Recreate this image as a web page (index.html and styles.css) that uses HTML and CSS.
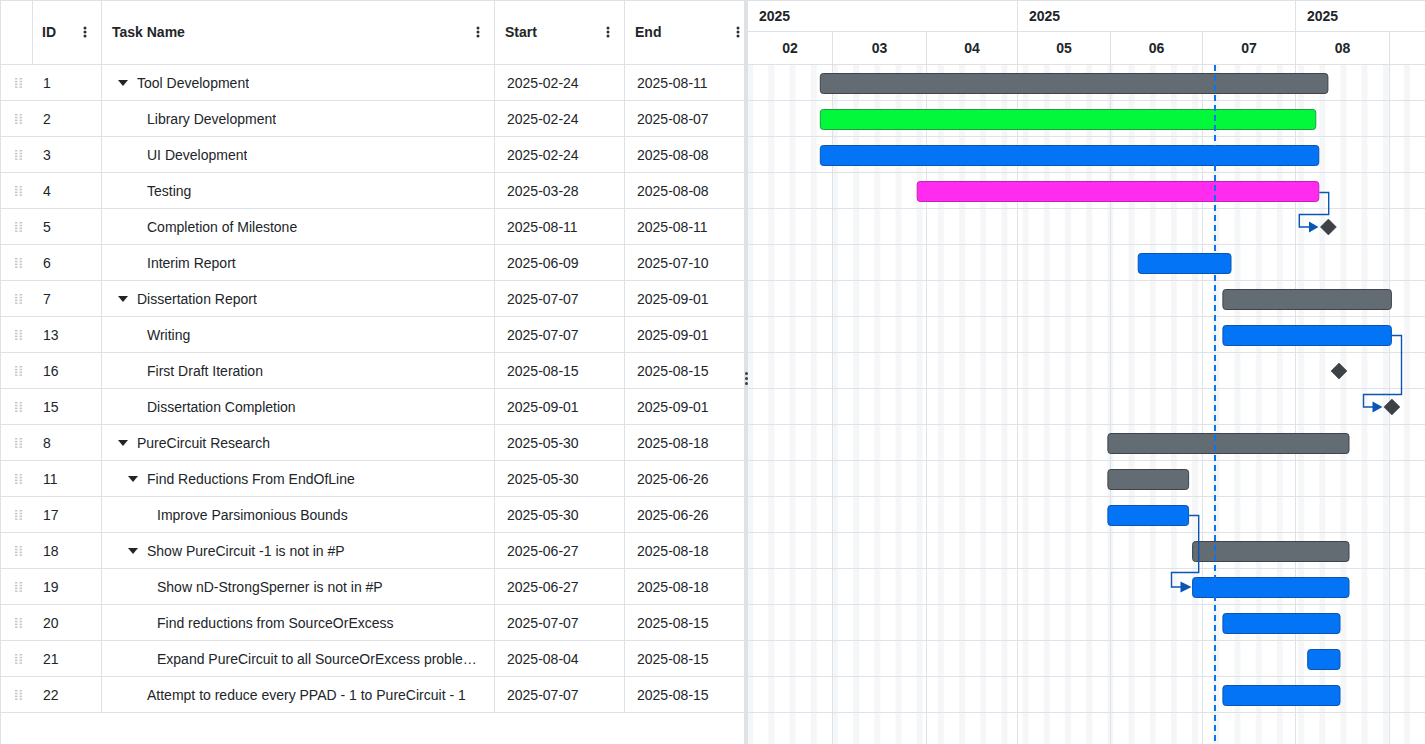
FILE: index.html
```html
<!DOCTYPE html>
<html lang="en">
<head>
<meta charset="utf-8">
<title>Gantt</title>
<link rel="stylesheet" href="styles.css">
</head>
<body>
<div class="app">
  <section class="grid-panel">
    <div class="row head">
      <div class="cell c-handle"></div>
      <div class="cell c-id"><span>ID</span><svg class="kebab" width="4" height="12" viewBox="0 0 4 12"><circle cx="2" cy="2" r="1.5"/><circle cx="2" cy="6" r="1.5"/><circle cx="2" cy="10" r="1.5"/></svg></div>
      <div class="cell c-name"><span>Task Name</span><svg class="kebab" width="4" height="12" viewBox="0 0 4 12"><circle cx="2" cy="2" r="1.5"/><circle cx="2" cy="6" r="1.5"/><circle cx="2" cy="10" r="1.5"/></svg></div>
      <div class="cell c-date"><span>Start</span><svg class="kebab" width="4" height="12" viewBox="0 0 4 12"><circle cx="2" cy="2" r="1.5"/><circle cx="2" cy="6" r="1.5"/><circle cx="2" cy="10" r="1.5"/></svg></div>
      <div class="cell c-end"><span>End</span><svg class="kebab" width="4" height="12" viewBox="0 0 4 12"><circle cx="2" cy="2" r="1.5"/><circle cx="2" cy="6" r="1.5"/><circle cx="2" cy="10" r="1.5"/></svg></div>
    </div>

    <div class="row">
      <div class="cell c-handle"><svg class="grip" width="7" height="10" viewBox="0 0 7 10"><rect x="0" y="0" width="2.5" height="1.5"/><rect x="4.5" y="0" width="2.5" height="1.5"/><rect x="0" y="2.8" width="2.5" height="1.5"/><rect x="4.5" y="2.8" width="2.5" height="1.5"/><rect x="0" y="5.6" width="2.5" height="1.5"/><rect x="4.5" y="5.6" width="2.5" height="1.5"/><rect x="0" y="8.4" width="2.5" height="1.5"/><rect x="4.5" y="8.4" width="2.5" height="1.5"/></svg></div>
      <div class="cell c-id">1</div>
      <div class="cell c-name lvl0"><span class="toggle"><svg width="10" height="6" viewBox="0 0 10 6"><polygon points="0,0 10,0 5,6"/></svg></span><span class="name">Tool Development</span></div>
      <div class="cell c-date">2025-02-24</div>
      <div class="cell c-end">2025-08-11</div>
    </div>
    <div class="row">
      <div class="cell c-handle"><svg class="grip" width="7" height="10" viewBox="0 0 7 10"><rect x="0" y="0" width="2.5" height="1.5"/><rect x="4.5" y="0" width="2.5" height="1.5"/><rect x="0" y="2.8" width="2.5" height="1.5"/><rect x="4.5" y="2.8" width="2.5" height="1.5"/><rect x="0" y="5.6" width="2.5" height="1.5"/><rect x="4.5" y="5.6" width="2.5" height="1.5"/><rect x="0" y="8.4" width="2.5" height="1.5"/><rect x="4.5" y="8.4" width="2.5" height="1.5"/></svg></div>
      <div class="cell c-id">2</div>
      <div class="cell c-name lvl1"><span class="toggle"></span><span class="name">Library Development</span></div>
      <div class="cell c-date">2025-02-24</div>
      <div class="cell c-end">2025-08-07</div>
    </div>
    <div class="row">
      <div class="cell c-handle"><svg class="grip" width="7" height="10" viewBox="0 0 7 10"><rect x="0" y="0" width="2.5" height="1.5"/><rect x="4.5" y="0" width="2.5" height="1.5"/><rect x="0" y="2.8" width="2.5" height="1.5"/><rect x="4.5" y="2.8" width="2.5" height="1.5"/><rect x="0" y="5.6" width="2.5" height="1.5"/><rect x="4.5" y="5.6" width="2.5" height="1.5"/><rect x="0" y="8.4" width="2.5" height="1.5"/><rect x="4.5" y="8.4" width="2.5" height="1.5"/></svg></div>
      <div class="cell c-id">3</div>
      <div class="cell c-name lvl1"><span class="toggle"></span><span class="name">UI Development</span></div>
      <div class="cell c-date">2025-02-24</div>
      <div class="cell c-end">2025-08-08</div>
    </div>
    <div class="row">
      <div class="cell c-handle"><svg class="grip" width="7" height="10" viewBox="0 0 7 10"><rect x="0" y="0" width="2.5" height="1.5"/><rect x="4.5" y="0" width="2.5" height="1.5"/><rect x="0" y="2.8" width="2.5" height="1.5"/><rect x="4.5" y="2.8" width="2.5" height="1.5"/><rect x="0" y="5.6" width="2.5" height="1.5"/><rect x="4.5" y="5.6" width="2.5" height="1.5"/><rect x="0" y="8.4" width="2.5" height="1.5"/><rect x="4.5" y="8.4" width="2.5" height="1.5"/></svg></div>
      <div class="cell c-id">4</div>
      <div class="cell c-name lvl1"><span class="toggle"></span><span class="name">Testing</span></div>
      <div class="cell c-date">2025-03-28</div>
      <div class="cell c-end">2025-08-08</div>
    </div>
    <div class="row">
      <div class="cell c-handle"><svg class="grip" width="7" height="10" viewBox="0 0 7 10"><rect x="0" y="0" width="2.5" height="1.5"/><rect x="4.5" y="0" width="2.5" height="1.5"/><rect x="0" y="2.8" width="2.5" height="1.5"/><rect x="4.5" y="2.8" width="2.5" height="1.5"/><rect x="0" y="5.6" width="2.5" height="1.5"/><rect x="4.5" y="5.6" width="2.5" height="1.5"/><rect x="0" y="8.4" width="2.5" height="1.5"/><rect x="4.5" y="8.4" width="2.5" height="1.5"/></svg></div>
      <div class="cell c-id">5</div>
      <div class="cell c-name lvl1"><span class="toggle"></span><span class="name">Completion of Milestone</span></div>
      <div class="cell c-date">2025-08-11</div>
      <div class="cell c-end">2025-08-11</div>
    </div>
    <div class="row">
      <div class="cell c-handle"><svg class="grip" width="7" height="10" viewBox="0 0 7 10"><rect x="0" y="0" width="2.5" height="1.5"/><rect x="4.5" y="0" width="2.5" height="1.5"/><rect x="0" y="2.8" width="2.5" height="1.5"/><rect x="4.5" y="2.8" width="2.5" height="1.5"/><rect x="0" y="5.6" width="2.5" height="1.5"/><rect x="4.5" y="5.6" width="2.5" height="1.5"/><rect x="0" y="8.4" width="2.5" height="1.5"/><rect x="4.5" y="8.4" width="2.5" height="1.5"/></svg></div>
      <div class="cell c-id">6</div>
      <div class="cell c-name lvl1"><span class="toggle"></span><span class="name">Interim Report</span></div>
      <div class="cell c-date">2025-06-09</div>
      <div class="cell c-end">2025-07-10</div>
    </div>
    <div class="row">
      <div class="cell c-handle"><svg class="grip" width="7" height="10" viewBox="0 0 7 10"><rect x="0" y="0" width="2.5" height="1.5"/><rect x="4.5" y="0" width="2.5" height="1.5"/><rect x="0" y="2.8" width="2.5" height="1.5"/><rect x="4.5" y="2.8" width="2.5" height="1.5"/><rect x="0" y="5.6" width="2.5" height="1.5"/><rect x="4.5" y="5.6" width="2.5" height="1.5"/><rect x="0" y="8.4" width="2.5" height="1.5"/><rect x="4.5" y="8.4" width="2.5" height="1.5"/></svg></div>
      <div class="cell c-id">7</div>
      <div class="cell c-name lvl0"><span class="toggle"><svg width="10" height="6" viewBox="0 0 10 6"><polygon points="0,0 10,0 5,6"/></svg></span><span class="name">Dissertation Report</span></div>
      <div class="cell c-date">2025-07-07</div>
      <div class="cell c-end">2025-09-01</div>
    </div>
    <div class="row">
      <div class="cell c-handle"><svg class="grip" width="7" height="10" viewBox="0 0 7 10"><rect x="0" y="0" width="2.5" height="1.5"/><rect x="4.5" y="0" width="2.5" height="1.5"/><rect x="0" y="2.8" width="2.5" height="1.5"/><rect x="4.5" y="2.8" width="2.5" height="1.5"/><rect x="0" y="5.6" width="2.5" height="1.5"/><rect x="4.5" y="5.6" width="2.5" height="1.5"/><rect x="0" y="8.4" width="2.5" height="1.5"/><rect x="4.5" y="8.4" width="2.5" height="1.5"/></svg></div>
      <div class="cell c-id">13</div>
      <div class="cell c-name lvl1"><span class="toggle"></span><span class="name">Writing</span></div>
      <div class="cell c-date">2025-07-07</div>
      <div class="cell c-end">2025-09-01</div>
    </div>
    <div class="row">
      <div class="cell c-handle"><svg class="grip" width="7" height="10" viewBox="0 0 7 10"><rect x="0" y="0" width="2.5" height="1.5"/><rect x="4.5" y="0" width="2.5" height="1.5"/><rect x="0" y="2.8" width="2.5" height="1.5"/><rect x="4.5" y="2.8" width="2.5" height="1.5"/><rect x="0" y="5.6" width="2.5" height="1.5"/><rect x="4.5" y="5.6" width="2.5" height="1.5"/><rect x="0" y="8.4" width="2.5" height="1.5"/><rect x="4.5" y="8.4" width="2.5" height="1.5"/></svg></div>
      <div class="cell c-id">16</div>
      <div class="cell c-name lvl1"><span class="toggle"></span><span class="name">First Draft Iteration</span></div>
      <div class="cell c-date">2025-08-15</div>
      <div class="cell c-end">2025-08-15</div>
    </div>
    <div class="row">
      <div class="cell c-handle"><svg class="grip" width="7" height="10" viewBox="0 0 7 10"><rect x="0" y="0" width="2.5" height="1.5"/><rect x="4.5" y="0" width="2.5" height="1.5"/><rect x="0" y="2.8" width="2.5" height="1.5"/><rect x="4.5" y="2.8" width="2.5" height="1.5"/><rect x="0" y="5.6" width="2.5" height="1.5"/><rect x="4.5" y="5.6" width="2.5" height="1.5"/><rect x="0" y="8.4" width="2.5" height="1.5"/><rect x="4.5" y="8.4" width="2.5" height="1.5"/></svg></div>
      <div class="cell c-id">15</div>
      <div class="cell c-name lvl1"><span class="toggle"></span><span class="name">Dissertation Completion</span></div>
      <div class="cell c-date">2025-09-01</div>
      <div class="cell c-end">2025-09-01</div>
    </div>
    <div class="row">
      <div class="cell c-handle"><svg class="grip" width="7" height="10" viewBox="0 0 7 10"><rect x="0" y="0" width="2.5" height="1.5"/><rect x="4.5" y="0" width="2.5" height="1.5"/><rect x="0" y="2.8" width="2.5" height="1.5"/><rect x="4.5" y="2.8" width="2.5" height="1.5"/><rect x="0" y="5.6" width="2.5" height="1.5"/><rect x="4.5" y="5.6" width="2.5" height="1.5"/><rect x="0" y="8.4" width="2.5" height="1.5"/><rect x="4.5" y="8.4" width="2.5" height="1.5"/></svg></div>
      <div class="cell c-id">8</div>
      <div class="cell c-name lvl0"><span class="toggle"><svg width="10" height="6" viewBox="0 0 10 6"><polygon points="0,0 10,0 5,6"/></svg></span><span class="name">PureCircuit Research</span></div>
      <div class="cell c-date">2025-05-30</div>
      <div class="cell c-end">2025-08-18</div>
    </div>
    <div class="row">
      <div class="cell c-handle"><svg class="grip" width="7" height="10" viewBox="0 0 7 10"><rect x="0" y="0" width="2.5" height="1.5"/><rect x="4.5" y="0" width="2.5" height="1.5"/><rect x="0" y="2.8" width="2.5" height="1.5"/><rect x="4.5" y="2.8" width="2.5" height="1.5"/><rect x="0" y="5.6" width="2.5" height="1.5"/><rect x="4.5" y="5.6" width="2.5" height="1.5"/><rect x="0" y="8.4" width="2.5" height="1.5"/><rect x="4.5" y="8.4" width="2.5" height="1.5"/></svg></div>
      <div class="cell c-id">11</div>
      <div class="cell c-name lvl1"><span class="toggle"><svg width="10" height="6" viewBox="0 0 10 6"><polygon points="0,0 10,0 5,6"/></svg></span><span class="name">Find Reductions From EndOfLine</span></div>
      <div class="cell c-date">2025-05-30</div>
      <div class="cell c-end">2025-06-26</div>
    </div>
    <div class="row">
      <div class="cell c-handle"><svg class="grip" width="7" height="10" viewBox="0 0 7 10"><rect x="0" y="0" width="2.5" height="1.5"/><rect x="4.5" y="0" width="2.5" height="1.5"/><rect x="0" y="2.8" width="2.5" height="1.5"/><rect x="4.5" y="2.8" width="2.5" height="1.5"/><rect x="0" y="5.6" width="2.5" height="1.5"/><rect x="4.5" y="5.6" width="2.5" height="1.5"/><rect x="0" y="8.4" width="2.5" height="1.5"/><rect x="4.5" y="8.4" width="2.5" height="1.5"/></svg></div>
      <div class="cell c-id">17</div>
      <div class="cell c-name lvl2"><span class="toggle"></span><span class="name">Improve Parsimonious Bounds</span></div>
      <div class="cell c-date">2025-05-30</div>
      <div class="cell c-end">2025-06-26</div>
    </div>
    <div class="row">
      <div class="cell c-handle"><svg class="grip" width="7" height="10" viewBox="0 0 7 10"><rect x="0" y="0" width="2.5" height="1.5"/><rect x="4.5" y="0" width="2.5" height="1.5"/><rect x="0" y="2.8" width="2.5" height="1.5"/><rect x="4.5" y="2.8" width="2.5" height="1.5"/><rect x="0" y="5.6" width="2.5" height="1.5"/><rect x="4.5" y="5.6" width="2.5" height="1.5"/><rect x="0" y="8.4" width="2.5" height="1.5"/><rect x="4.5" y="8.4" width="2.5" height="1.5"/></svg></div>
      <div class="cell c-id">18</div>
      <div class="cell c-name lvl1"><span class="toggle"><svg width="10" height="6" viewBox="0 0 10 6"><polygon points="0,0 10,0 5,6"/></svg></span><span class="name">Show PureCircuit -1 is not in #P</span></div>
      <div class="cell c-date">2025-06-27</div>
      <div class="cell c-end">2025-08-18</div>
    </div>
    <div class="row">
      <div class="cell c-handle"><svg class="grip" width="7" height="10" viewBox="0 0 7 10"><rect x="0" y="0" width="2.5" height="1.5"/><rect x="4.5" y="0" width="2.5" height="1.5"/><rect x="0" y="2.8" width="2.5" height="1.5"/><rect x="4.5" y="2.8" width="2.5" height="1.5"/><rect x="0" y="5.6" width="2.5" height="1.5"/><rect x="4.5" y="5.6" width="2.5" height="1.5"/><rect x="0" y="8.4" width="2.5" height="1.5"/><rect x="4.5" y="8.4" width="2.5" height="1.5"/></svg></div>
      <div class="cell c-id">19</div>
      <div class="cell c-name lvl2"><span class="toggle"></span><span class="name">Show nD-StrongSperner is not in #P</span></div>
      <div class="cell c-date">2025-06-27</div>
      <div class="cell c-end">2025-08-18</div>
    </div>
    <div class="row">
      <div class="cell c-handle"><svg class="grip" width="7" height="10" viewBox="0 0 7 10"><rect x="0" y="0" width="2.5" height="1.5"/><rect x="4.5" y="0" width="2.5" height="1.5"/><rect x="0" y="2.8" width="2.5" height="1.5"/><rect x="4.5" y="2.8" width="2.5" height="1.5"/><rect x="0" y="5.6" width="2.5" height="1.5"/><rect x="4.5" y="5.6" width="2.5" height="1.5"/><rect x="0" y="8.4" width="2.5" height="1.5"/><rect x="4.5" y="8.4" width="2.5" height="1.5"/></svg></div>
      <div class="cell c-id">20</div>
      <div class="cell c-name lvl2"><span class="toggle"></span><span class="name">Find reductions from SourceOrExcess</span></div>
      <div class="cell c-date">2025-07-07</div>
      <div class="cell c-end">2025-08-15</div>
    </div>
    <div class="row">
      <div class="cell c-handle"><svg class="grip" width="7" height="10" viewBox="0 0 7 10"><rect x="0" y="0" width="2.5" height="1.5"/><rect x="4.5" y="0" width="2.5" height="1.5"/><rect x="0" y="2.8" width="2.5" height="1.5"/><rect x="4.5" y="2.8" width="2.5" height="1.5"/><rect x="0" y="5.6" width="2.5" height="1.5"/><rect x="4.5" y="5.6" width="2.5" height="1.5"/><rect x="0" y="8.4" width="2.5" height="1.5"/><rect x="4.5" y="8.4" width="2.5" height="1.5"/></svg></div>
      <div class="cell c-id">21</div>
      <div class="cell c-name lvl2"><span class="toggle"></span><span class="name">Expand PureCircuit to all SourceOrExcess problems</span></div>
      <div class="cell c-date">2025-08-04</div>
      <div class="cell c-end">2025-08-15</div>
    </div>
    <div class="row">
      <div class="cell c-handle"><svg class="grip" width="7" height="10" viewBox="0 0 7 10"><rect x="0" y="0" width="2.5" height="1.5"/><rect x="4.5" y="0" width="2.5" height="1.5"/><rect x="0" y="2.8" width="2.5" height="1.5"/><rect x="4.5" y="2.8" width="2.5" height="1.5"/><rect x="0" y="5.6" width="2.5" height="1.5"/><rect x="4.5" y="5.6" width="2.5" height="1.5"/><rect x="0" y="8.4" width="2.5" height="1.5"/><rect x="4.5" y="8.4" width="2.5" height="1.5"/></svg></div>
      <div class="cell c-id">22</div>
      <div class="cell c-name lvl1"><span class="toggle"></span><span class="name">Attempt to reduce every PPAD - 1 to PureCircuit - 1</span></div>
      <div class="cell c-date">2025-07-07</div>
      <div class="cell c-end">2025-08-15</div>
    </div>
  </section>

  <div class="splitter"><span class="dots"><i></i><i></i><i></i></span></div>

  <section class="gantt-panel">
    <div class="tier tier-years">
      <div class="ycell y1">2025</div>
      <div class="ycell y2">2025</div>
      <div class="ycell y3">2025</div>
    </div>
    <div class="tier tier-months">
      <div class="mcell m02">02</div>
      <div class="mcell m03">03</div>
      <div class="mcell m04">04</div>
      <div class="mcell m05">05</div>
      <div class="mcell m06">06</div>
      <div class="mcell m07">07</div>
      <div class="mcell m08">08</div>
      <div class="mcell m09"></div>
    </div>
    <svg class="chart" width="677" height="679" viewBox="0 0 677 679">
      <defs>
        <pattern id="weekend" patternUnits="userSpaceOnUse" x="-0.8" y="0" width="21.189" height="679">
          <rect x="0" y="0" width="6.054" height="679" fill="#f5f6f8"/>
        </pattern>
      </defs>
      <rect x="0" y="0" width="677" height="679" fill="url(#weekend)"/>
      <g class="vlines" stroke="#dfe2e6" stroke-width="1">
        <line x1="84.5" y1="0" x2="84.5" y2="679"/>
        <line x1="178.5" y1="0" x2="178.5" y2="679"/>
        <line x1="269.5" y1="0" x2="269.5" y2="679"/>
        <line x1="362.5" y1="0" x2="362.5" y2="679"/>
        <line x1="454.5" y1="0" x2="454.5" y2="679"/>
        <line x1="547.5" y1="0" x2="547.5" y2="679"/>
        <line x1="641.5" y1="0" x2="641.5" y2="679"/>
      </g>
      <g class="hlines" stroke="#dfe2e6" stroke-width="1">
        <line x1="0" y1="35.5" x2="677" y2="35.5"/>
        <line x1="0" y1="71.5" x2="677" y2="71.5"/>
        <line x1="0" y1="107.5" x2="677" y2="107.5"/>
        <line x1="0" y1="143.5" x2="677" y2="143.5"/>
        <line x1="0" y1="179.5" x2="677" y2="179.5"/>
        <line x1="0" y1="215.5" x2="677" y2="215.5"/>
        <line x1="0" y1="251.5" x2="677" y2="251.5"/>
        <line x1="0" y1="287.5" x2="677" y2="287.5"/>
        <line x1="0" y1="323.5" x2="677" y2="323.5"/>
        <line x1="0" y1="359.5" x2="677" y2="359.5"/>
        <line x1="0" y1="395.5" x2="677" y2="395.5"/>
        <line x1="0" y1="431.5" x2="677" y2="431.5"/>
        <line x1="0" y1="467.5" x2="677" y2="467.5"/>
        <line x1="0" y1="503.5" x2="677" y2="503.5"/>
        <line x1="0" y1="539.5" x2="677" y2="539.5"/>
        <line x1="0" y1="575.5" x2="677" y2="575.5"/>
        <line x1="0" y1="611.5" x2="677" y2="611.5"/>
        <line x1="0" y1="647.5" x2="677" y2="647.5"/>
      </g>

      <g class="bars">
        <rect class="bar parent" x="72.3" y="8.5" width="507.6" height="20" rx="3"/>
        <rect class="bar green" x="72.3" y="44.5" width="495.5" height="20" rx="3"/>
        <rect class="bar blue" x="72.3" y="80.5" width="498.5" height="20" rx="3"/>
        <rect class="bar magenta" x="169.2" y="116.5" width="401.6" height="20" rx="3"/>
        <polygon class="milestone" points="580.4,154 588.4,162 580.4,170 572.4,162"/>
        <rect class="bar blue" x="390.2" y="188.5" width="92.8" height="20" rx="3"/>
        <rect class="bar parent" x="474.9" y="224.5" width="168.5" height="20" rx="3"/>
        <rect class="bar blue" x="474.9" y="260.5" width="168.5" height="20" rx="3"/>
        <polygon class="milestone" points="591,298 599,306 591,314 583,306"/>
        <polygon class="milestone" points="643.9,334 651.9,342 643.9,350 635.9,342"/>
        <rect class="bar parent" x="359.9" y="368.5" width="241.1" height="20" rx="3"/>
        <rect class="bar parent" x="359.9" y="404.5" width="80.7" height="20" rx="3"/>
        <rect class="bar blue" x="359.9" y="440.5" width="80.7" height="20" rx="3"/>
        <rect class="bar parent" x="444.6" y="476.5" width="156.4" height="20" rx="3"/>
        <rect class="bar blue" x="444.6" y="512.5" width="156.4" height="20" rx="3"/>
        <rect class="bar blue" x="474.9" y="548.5" width="117.1" height="20" rx="3"/>
        <rect class="bar blue" x="559.7" y="584.5" width="32.3" height="20" rx="3"/>
        <rect class="bar blue" x="474.9" y="620.5" width="117.1" height="20" rx="3"/>
      </g>

      <g class="links">
        <polyline points="571.3,127.5 580.7,127.5 580.7,149.5 551.3,149.5 551.3,162 562,162"/>
        <polygon class="arrow" points="561,156.5 570.5,162 561,167.5"/>
        <polyline points="643.9,270.5 653.5,270.5 653.5,329.5 615.5,329.5 615.5,342 625,342"/>
        <polygon class="arrow" points="624.5,336.5 634.5,342 624.5,347.5"/>
        <polyline points="441.1,450.5 450.7,450.5 450.7,507.5 423.5,507.5 423.5,522 433,522"/>
        <polygon class="arrow" points="432.5,516.5 443.5,522 432.5,527.5"/>
      </g>

      <line class="today" x1="467" y1="0" x2="467" y2="679"/>
    </svg>
  </section>
</div>
</body>
</html>
```

FILE: styles.css
```css
* { box-sizing: border-box; }

html, body {
  margin: 0;
  padding: 0;
  background: #ffffff;
}

body {
  font-family: "Liberation Sans", Arial, Helvetica, sans-serif;
  font-size: 14px;
  color: #212529;
}

.app {
  display: flex;
  width: 1425px;
  height: 744px;
  border-top: 1px solid #dee2e6;
  overflow: hidden;
}

/* ---------- left grid ---------- */
.grid-panel {
  flex: none;
  width: 744px;
  border-left: 1px solid #dee2e6;
}

.row {
  display: grid;
  grid-template-columns: 32px 69px 393px 130px 119px;
  height: 36px;
  border-bottom: 1px solid #dee2e6;
}

.row.head {
  height: 64px;
  font-weight: bold;
}

.cell {
  display: flex;
  align-items: center;
  min-width: 0;
  border-right: 1px solid #dee2e6;
  white-space: nowrap;
}

.row .c-handle { border-right-color: transparent; padding-left: 14px; }
.row.head .c-handle { border-right-color: #dee2e6; }
.c-end { border-right: none; }

.c-id { padding-left: 10px; }
.c-date, .c-end { padding-left: 12px; }

.head .cell {
  justify-content: space-between;
  padding-left: 10px;
  padding-right: 14px;
  padding-bottom: 2px;
}
.head .c-id { padding-left: 9px; }
.head .c-end { padding-right: 4px; }
.head .c-handle { padding: 0; }

.kebab { fill: #2b2f33; flex: none; }

.grip { fill: #c3c7cb; display: block; }

.c-name { overflow: hidden; padding-right: 14px; }
.c-name.lvl0 { padding-left: 16px; }
.c-name.lvl1 { padding-left: 26px; }
.c-name.lvl2 { padding-left: 36px; }

.toggle {
  flex: none;
  width: 19px;
  display: flex;
  align-items: center;
}
.toggle svg { fill: #212529; display: block; margin-top: 1px; }

.name {
  overflow: hidden;
  text-overflow: ellipsis;
  white-space: nowrap;
  min-width: 0;
}

/* ---------- splitter ---------- */
.splitter {
  flex: none;
  width: 4px;
  background: #dde2e7;
  display: flex;
  align-items: center;
  justify-content: center;
  padding-top: 12px;
}
.dots { display: flex; flex-direction: column; gap: 2px; }
.dots i {
  display: block;
  width: 3px;
  height: 3px;
  border-radius: 50%;
  background: #3a3f44;
}

/* ---------- gantt ---------- */
.gantt-panel {
  flex: 1;
  min-width: 0;
  overflow: hidden;
  display: flex;
  flex-direction: column;
}

.tier {
  display: flex;
  flex: none;
  font-weight: bold;
  border-bottom: 1px solid #dee2e6;
  white-space: nowrap;
}
.tier-years { height: 31px; }
.tier-months { height: 33px; }

.ycell {
  flex: none;
  display: flex;
  align-items: center;
  padding-left: 11px;
  border-right: 1px solid #dee2e6;
}
.y1 { width: 270px; }
.y2 { width: 278px; }
.y3 { width: 129px; border-right: none; }

.mcell {
  flex: none;
  display: flex;
  align-items: center;
  justify-content: center;
  border-right: 1px solid #dee2e6;
}
.m02 { width: 85px; }
.m03 { width: 94px; }
.m04 { width: 91px; }
.m05 { width: 93px; }
.m06 { width: 92px; }
.m07 { width: 93px; }
.m08 { width: 94px; }
.m09 { width: 35px; border-right: none; }

.chart { display: block; flex: none; }

.bar { stroke-width: 1; }
.bar.parent { fill: #626c72; stroke: #3e4449; }
.bar.green { fill: #02f83b; stroke: #1e9e3c; }
.bar.blue { fill: #0274f5; stroke: #0a55b2; }
.bar.magenta { fill: #ff2cf0; stroke: #c321b6; }

.milestone { fill: #3d4247; stroke: #2e3236; stroke-width: 0.5; }

.links polyline {
  fill: none;
  stroke: #0b55b4;
  stroke-width: 1.4;
}
.links .arrow { fill: #0b55b4; }

.today {
  stroke: #0a74f0;
  stroke-width: 2;
  stroke-dasharray: 6 4;
}
```
